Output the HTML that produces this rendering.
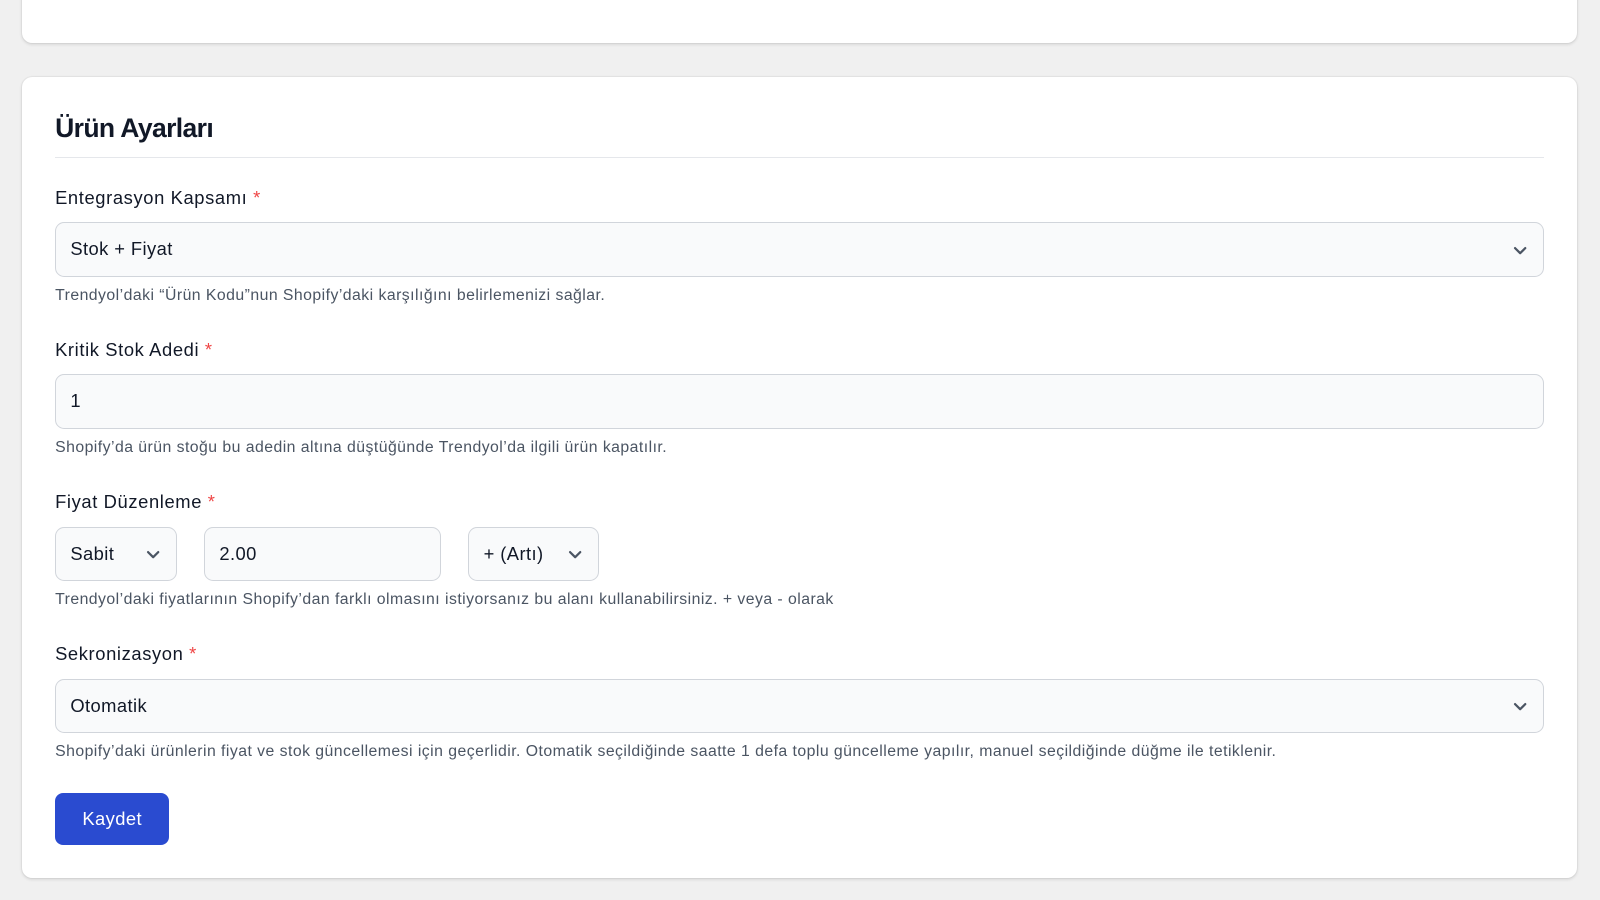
<!DOCTYPE html>
<html><head><meta charset="utf-8"><style>
*{box-sizing:border-box;margin:0;padding:0}
html{background:#f0f0f0;overflow:hidden}
body{width:1568px;height:882px;background:#f0f0f0;font-family:"Liberation Sans",sans-serif;color:#111827;position:relative;overflow:hidden;zoom:1.0204}
.card{position:absolute;left:22px;width:1523px;background:#fff;border-radius:10px;box-shadow:0 1px 3px rgba(0,0,0,.12),0 0 0 1px rgba(0,0,0,.03)}
h2{position:absolute;left:32px;top:36px;font-size:26px;font-weight:bold;letter-spacing:-0.6px}
.hr{position:absolute;left:32px;top:79px;width:1459px;height:1px;background:#e5e7eb}
.lbl{position:absolute;left:32px;font-size:18px;color:#111827;letter-spacing:0.6px}
.lbl span{color:#ef4444}
.inp{position:absolute;left:32px;width:1459px;height:53px;background:#f9fafb;border:1px solid #d1d5db;border-radius:9px;font-size:18px;padding-left:14px;line-height:51px;letter-spacing:0.4px}
.help{position:absolute;left:32px;font-size:15.5px;color:#4b5563;letter-spacing:0.45px}
.chev{position:absolute;top:18px;width:16px;height:16px}
.btn{position:absolute;left:32px;top:702px;width:112px;height:51px;background:#2a4bd0;border-radius:8px;color:#fff;font-size:18px;text-align:center;line-height:51px;letter-spacing:0.4px}
</style></head><body>
<div class="card" style="top:-20px;height:62px"></div>
<div class="card" style="top:75px;height:785px">
<h2>Ürün Ayarları</h2>
<div class="hr"></div>
<div class="lbl" style="top:108px">Entegrasyon Kapsamı <span>*</span></div>
<div class="inp" style="top:143px">Stok + Fiyat<svg class="chev" style="right:14px" viewBox="0 0 16 16"><path d="M3 6l5 5 5-5" fill="none" stroke="#4b5563" stroke-width="2.2" stroke-linecap="round" stroke-linejoin="round"/></svg></div>
<div class="help" style="top:206px">Trendyol’daki “Ürün Kodu”nun Shopify’daki karşılığını belirlemenizi sağlar.</div>
<div class="lbl" style="top:257px">Kritik Stok Adedi <span>*</span></div>
<div class="inp" style="top:292px">1</div>
<div class="help" style="top:355px">Shopify’da ürün stoğu bu adedin altına düştüğünde Trendyol’da ilgili ürün kapatılır.</div>
<div class="lbl" style="top:406px">Fiyat Düzenleme <span>*</span></div>
<div class="inp" style="top:441px;width:119px">Sabit<svg class="chev" style="right:14px" viewBox="0 0 16 16"><path d="M3 6l5 5 5-5" fill="none" stroke="#4b5563" stroke-width="2.2" stroke-linecap="round" stroke-linejoin="round"/></svg></div>
<div class="inp" style="top:441px;left:178px;width:232px">2.00</div>
<div class="inp" style="top:441px;left:437px;width:128px">+ (Artı)<svg class="chev" style="right:14px" viewBox="0 0 16 16"><path d="M3 6l5 5 5-5" fill="none" stroke="#4b5563" stroke-width="2.2" stroke-linecap="round" stroke-linejoin="round"/></svg></div>
<div class="help" style="top:504px">Trendyol’daki fiyatlarının Shopify’dan farklı olmasını istiyorsanız bu alanı kullanabilirsiniz. + veya - olarak</div>
<div class="lbl" style="top:555px">Sekronizasyon <span>*</span></div>
<div class="inp" style="top:590px">Otomatik<svg class="chev" style="right:14px" viewBox="0 0 16 16"><path d="M3 6l5 5 5-5" fill="none" stroke="#4b5563" stroke-width="2.2" stroke-linecap="round" stroke-linejoin="round"/></svg></div>
<div class="help" style="top:653px">Shopify’daki ürünlerin fiyat ve stok güncellemesi için geçerlidir. Otomatik seçildiğinde saatte 1 defa toplu güncelleme yapılır, manuel seçildiğinde düğme ile tetiklenir.</div>
<div class="btn">Kaydet</div>
</div>
</body></html>
